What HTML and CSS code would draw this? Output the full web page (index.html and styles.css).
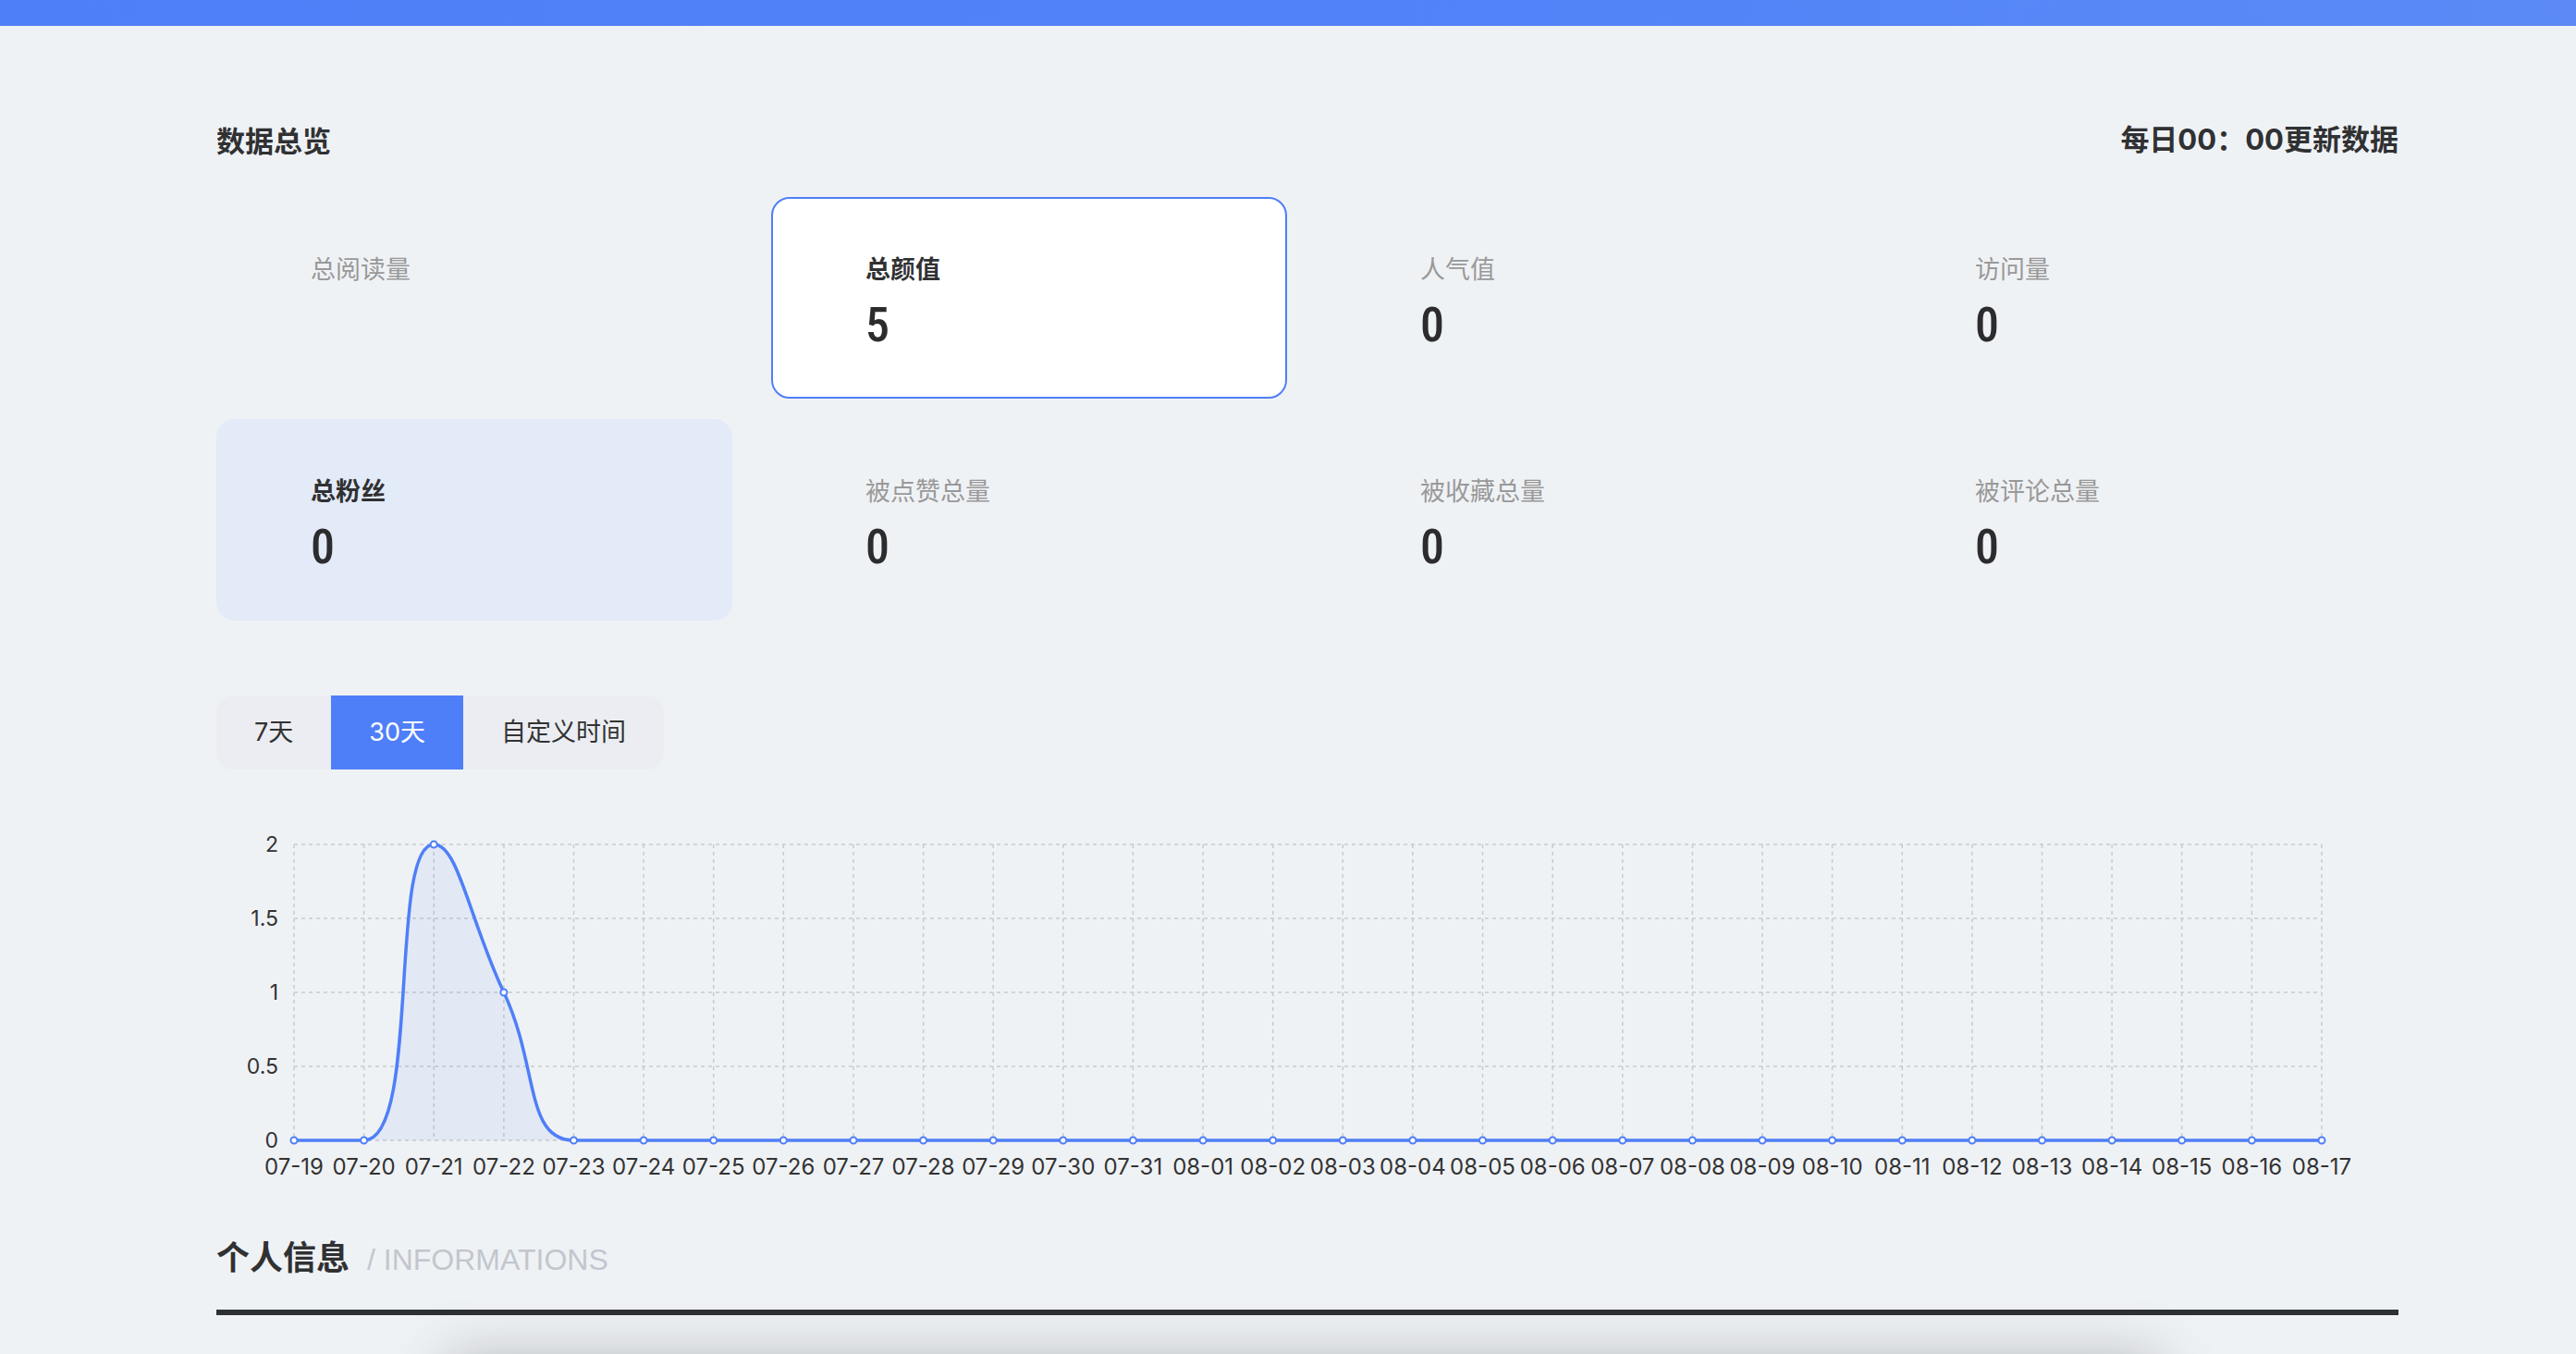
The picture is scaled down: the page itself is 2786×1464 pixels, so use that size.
FILE: index.html
```html
<!DOCTYPE html>
<html lang="zh-CN">
<head>
<meta charset="utf-8">
<title>数据总览</title>
<link rel="stylesheet" href="styles.css">
</head>
<body>
<div class="topbar"></div>
<main class="page">
  <header class="overview-head">
    <h1 class="overview-title">数据总览</h1>
    <span class="overview-note">每日00：00更新数据</span>
  </header>

  <section class="stats">
    <div class="stat"><div class="stat-label">总阅读量</div><div class="stat-value"></div></div>
    <div class="stat stat--selected"><div class="stat-label stat-label--strong">总颜值</div><div class="stat-value">5</div></div>
    <div class="stat"><div class="stat-label">人气值</div><div class="stat-value">0</div></div>
    <div class="stat"><div class="stat-label">访问量</div><div class="stat-value">0</div></div>
    <div class="stat stat--focus"><div class="stat-label stat-label--strong">总粉丝</div><div class="stat-value">0</div></div>
    <div class="stat"><div class="stat-label">被点赞总量</div><div class="stat-value">0</div></div>
    <div class="stat"><div class="stat-label">被收藏总量</div><div class="stat-value">0</div></div>
    <div class="stat"><div class="stat-label">被评论总量</div><div class="stat-value">0</div></div>
  </section>

  <div class="range-tabs">
    <button class="range-tab">7天</button>
    <button class="range-tab range-tab--active">30天</button>
    <button class="range-tab">自定义时间</button>
  </div>

  <div class="chart">
    <svg class="chart-svg" width="2360" height="400" viewBox="0 0 2360 400" xmlns="http://www.w3.org/2000/svg">
      <path class="grid" d="M84,33H2277M84,113H2277M84,193H2277M84,273H2277M84,353H2277"/>
      <path class="grid" d="M84,33V353M159.6,33V353M235.2,33V353M310.9,33V353M386.5,33V353M462.1,33V353M537.7,33V353M613.3,33V353M689,33V353M764.6,33V353M840.2,33V353M915.8,33V353M991.4,33V353M1067.1,33V353M1142.7,33V353M1218.3,33V353M1293.9,33V353M1369.5,33V353M1445.2,33V353M1520.8,33V353M1596.4,33V353M1672,33V353M1747.6,33V353M1823.3,33V353M1898.9,33V353M1974.5,33V353M2050.1,33V353M2125.7,33V353M2201.4,33V353M2277,33V353"/>

      <g class="y-labels">
        <text x="67" y="33">2</text>
        <text x="67" y="113">1.5</text>
        <text x="67" y="193">1</text>
        <text x="67" y="273">0.5</text>
        <text x="67" y="353">0</text>
      </g>

      <path class="area" d="M84,353L159.6,353C221.1,353 186,33 235.2,33C261.7,33 273.1,113 310.9,193C348.7,273 333.6,353 386.5,353L2277,353Z"/>
      <path class="line" d="M84,353L159.6,353C221.1,353 186,33 235.2,33C261.7,33 273.1,113 310.9,193C348.7,273 333.6,353 386.5,353L2277,353"/>

      <g class="dots">
        <circle cx="84" cy="353" r="3.5"/>
        <circle cx="159.6" cy="353" r="3.5"/>
        <circle cx="235.2" cy="33" r="3.5"/>
        <circle cx="310.9" cy="193" r="3.5"/>
        <circle cx="386.5" cy="353" r="3.5"/>
        <circle cx="462.1" cy="353" r="3.5"/>
        <circle cx="537.7" cy="353" r="3.5"/>
        <circle cx="613.3" cy="353" r="3.5"/>
        <circle cx="689" cy="353" r="3.5"/>
        <circle cx="764.6" cy="353" r="3.5"/>
        <circle cx="840.2" cy="353" r="3.5"/>
        <circle cx="915.8" cy="353" r="3.5"/>
        <circle cx="991.4" cy="353" r="3.5"/>
        <circle cx="1067.1" cy="353" r="3.5"/>
        <circle cx="1142.7" cy="353" r="3.5"/>
        <circle cx="1218.3" cy="353" r="3.5"/>
        <circle cx="1293.9" cy="353" r="3.5"/>
        <circle cx="1369.5" cy="353" r="3.5"/>
        <circle cx="1445.2" cy="353" r="3.5"/>
        <circle cx="1520.8" cy="353" r="3.5"/>
        <circle cx="1596.4" cy="353" r="3.5"/>
        <circle cx="1672" cy="353" r="3.5"/>
        <circle cx="1747.6" cy="353" r="3.5"/>
        <circle cx="1823.3" cy="353" r="3.5"/>
        <circle cx="1898.9" cy="353" r="3.5"/>
        <circle cx="1974.5" cy="353" r="3.5"/>
        <circle cx="2050.1" cy="353" r="3.5"/>
        <circle cx="2125.7" cy="353" r="3.5"/>
        <circle cx="2201.4" cy="353" r="3.5"/>
        <circle cx="2277" cy="353" r="3.5"/>
      </g>

      <g class="x-labels">
        <text x="84" y="381">07-19</text>
        <text x="159.6" y="381">07-20</text>
        <text x="235.2" y="381">07-21</text>
        <text x="310.9" y="381">07-22</text>
        <text x="386.5" y="381">07-23</text>
        <text x="462.1" y="381">07-24</text>
        <text x="537.7" y="381">07-25</text>
        <text x="613.3" y="381">07-26</text>
        <text x="689" y="381">07-27</text>
        <text x="764.6" y="381">07-28</text>
        <text x="840.2" y="381">07-29</text>
        <text x="915.8" y="381">07-30</text>
        <text x="991.4" y="381">07-31</text>
        <text x="1067.1" y="381">08-01</text>
        <text x="1142.7" y="381">08-02</text>
        <text x="1218.3" y="381">08-03</text>
        <text x="1293.9" y="381">08-04</text>
        <text x="1369.5" y="381">08-05</text>
        <text x="1445.2" y="381">08-06</text>
        <text x="1520.8" y="381">08-07</text>
        <text x="1596.4" y="381">08-08</text>
        <text x="1672" y="381">08-09</text>
        <text x="1747.6" y="381">08-10</text>
        <text x="1823.3" y="381">08-11</text>
        <text x="1898.9" y="381">08-12</text>
        <text x="1974.5" y="381">08-13</text>
        <text x="2050.1" y="381">08-14</text>
        <text x="2125.7" y="381">08-15</text>
        <text x="2201.4" y="381">08-16</text>
        <text x="2277" y="381">08-17</text>
      </g>
    </svg>
  </div>

  <h2 class="section-title">个人信息<span class="section-sub">/ INFORMATIONS</span></h2>
  <div class="profile-card"></div>
</main>
</body>
</html>
```

FILE: styles.css
```css
* {
  box-sizing: border-box;
  margin: 0;
  padding: 0;
}

html,
body {
  height: 100%;
}

body {
  background: #eff2f5;
  color: #303133;
  font-family: Inter, "Noto Sans CJK SC", sans-serif;
  overflow: hidden;
}

.topbar {
  height: 28px;
  background: linear-gradient(90deg, #4f7ff8 0%, #5283f8 60%, #5b8af6 100%);
}

.page {
  width: 2360px;
  margin-left: 234px;
  padding-top: 103px;
}

.overview-head {
  display: flex;
  justify-content: space-between;
  align-items: center;
  height: 40px;
}

.overview-title {
  font-family: "Noto Sans CJK SC", sans-serif;
  font-size: 31px;
  line-height: 40px;
  font-weight: 700;
  color: #303133;
}

.overview-note {
  font-size: 31px;
  line-height: 40px;
  font-weight: 700;
  color: #303133;
}

.stats {
  display: grid;
  grid-template-columns: repeat(4, 558px);
  column-gap: 42px;
  row-gap: 22px;
  margin-top: 42px;
}

.stat {
  height: 218px;
  border: 2px solid transparent;
  border-radius: 20px;
  padding: 57px 0 0 100px;
}

.stat--selected {
  background: #ffffff;
  border-color: #4f7ff8;
}

.stat--focus {
  background: #e3eaf8;
  border-color: #e3eaf8;
}

.stat-label {
  font-family: "Noto Sans CJK SC", sans-serif;
  font-size: 27px;
  line-height: 36px;
  color: #999999;
}

.stat-label--strong {
  color: #303133;
  font-weight: 700;
}

.stat-value {
  font-family: "Roboto Condensed", Roboto, sans-serif;
  font-weight: 500;
  font-size: 52px;
  line-height: 60px;
  height: 60px;
  margin-top: 14px;
  color: #2c2c2e;
}

.range-tabs {
  display: inline-flex;
  margin-top: 81px;
  height: 80px;
  background: #ebedf2;
  border-radius: 18px;
}

.range-tab {
  border: 0;
  background: transparent;
  padding: 0 41px;
  height: 80px;
  font-family: Inter, "Noto Sans CJK SC", sans-serif;
  font-size: 27px;
  line-height: 80px;
  color: #333333;
  cursor: pointer;
}

.range-tab--active {
  background: #4f7ff8;
  color: #ffffff;
}

.chart {
  margin-top: 48px;
  height: 400px;
}

.chart-svg {
  display: block;
}

.grid {
  fill: none;
  stroke: #c9cacc;
  stroke-width: 1.5;
  stroke-dasharray: 4 4;
}

.area {
  fill: #4f7ff8;
  fill-opacity: 0.08;
  stroke: none;
}

.line {
  fill: none;
  stroke: #4f7ff8;
  stroke-width: 3.5;
  stroke-linejoin: round;
}

.dots circle {
  fill: #ffffff;
  stroke: #4f7ff8;
  stroke-width: 2;
}

.y-labels text {
  font-family: Inter, sans-serif;
  font-size: 23px;
  fill: #333333;
  text-anchor: end;
  dominant-baseline: central;
}

.x-labels text {
  font-family: Inter, sans-serif;
  font-size: 24px;
  fill: #333333;
  text-anchor: middle;
  dominant-baseline: central;
}

.section-title {
  margin-top: 53px;
  padding-bottom: 30px;
  border-bottom: 6px solid #2f3033;
  font-family: "Noto Sans CJK SC", sans-serif;
  font-size: 36px;
  line-height: 48px;
  font-weight: 700;
  color: #303133;
}

.section-sub {
  margin-left: 19px;
  font-family: "Liberation Sans", sans-serif;
  font-size: 32px;
  font-weight: 400;
  color: #c3c6ce;
}

.profile-card {
  margin: 48px 0 0 250px;
  width: 1850px;
  height: 300px;
  background: #eff2f5;
  box-shadow: 0 0 60px rgba(0, 0, 0, 0.25);
}
```
